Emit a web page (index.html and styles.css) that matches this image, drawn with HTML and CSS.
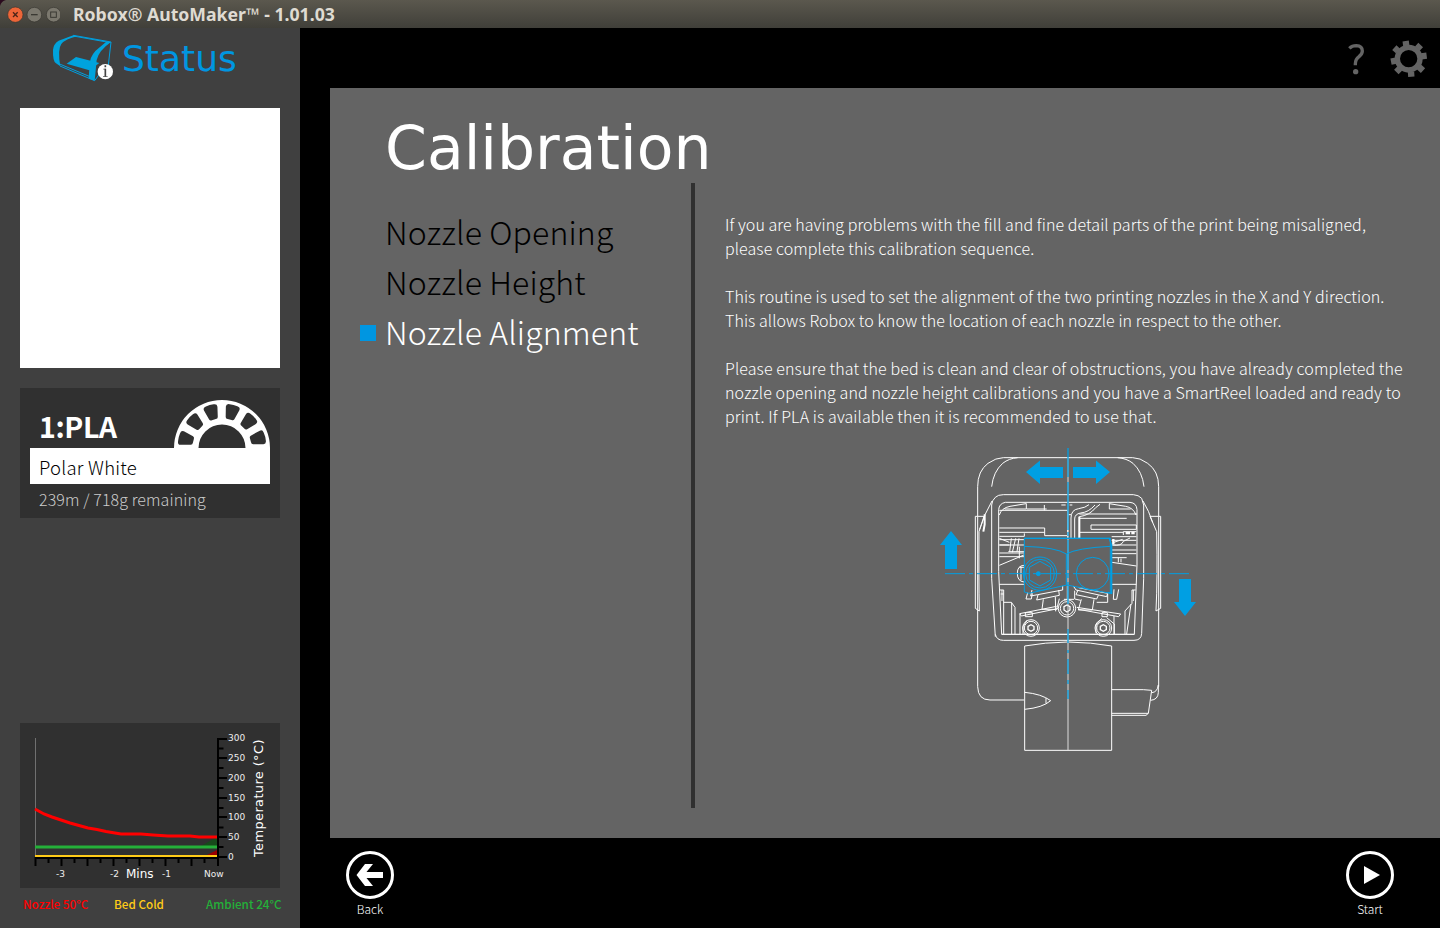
FILE: index.html
```html
<!DOCTYPE html>
<html lang="en">
<head>
<meta charset="utf-8">
<title>Robox® AutoMaker™ - 1.01.03</title>
<link rel="stylesheet" href="styles.css">
</head>
<body>
<header class="titlebar">
  <svg class="window-buttons" width="60" height="28" viewBox="0 0 180 84">
    <path d="M0 0H18Q4 3 0 18Z" fill="#2a0b1e"/>
    <circle cx="46" cy="44" r="23" fill="#ec6538" stroke="#37352f" stroke-width="2"/>
    <path d="M39 37L53 51M53 37L39 51" stroke="#4c2518" stroke-width="4"/>
    <circle cx="103" cy="44" r="22" fill="#7b786e" stroke="#37352f" stroke-width="2"/>
    <path d="M93 44H113" stroke="#3a3933" stroke-width="4"/>
    <circle cx="161" cy="44" r="22" fill="#7b786e" stroke="#37352f" stroke-width="2"/>
    <rect x="152" y="36" width="17" height="16" fill="none" stroke="#3a3933" stroke-width="3"/>
  </svg>
  <h1 class="window-title">Robox® AutoMaker™ - 1.01.03</h1>
</header>
<div class="workspace">
  <aside class="sidebar">
    <div class="status">
      <svg class="status-icon" width="64" height="50" viewBox="150 99 192 150">
        <path d="M220 106L333 126L325 195M220 108L331 128M180 198L284 242M174 190L270 230M284 242L300 220" fill="none" stroke="#009fe0" stroke-width="3"/>
        <path d="M220 106L232 109Q196 117 184 132Q172 148 181 199L168 190Q158 184 159 150Q160 132 176 122Z" fill="#00a3dd"/>
        <path d="M333 126Q296 152 290 180L284 242L266 236L269 188Q272 162 300 141L318 126Z" fill="#00a3dd"/>
        <path d="M228 171L298 189L268 211L200 191Z" fill="#00a3dd"/>
        <circle cx="316" cy="215" r="23" fill="#fff"/>
        <path d="M316 206V230M316 196V202" fill="none" stroke="#444" stroke-width="5"/>
        <path d="M310 207.500H317M309 229.500H323" fill="none" stroke="#444" stroke-width="2"/>
      </svg>
      <h2 class="status-title">Status</h2>
    </div>
    <div class="preview"></div>
    <section class="reel">
      <div class="reel-top">
        <span class="reel-type">1:PLA</span>
        <svg class="reel-icon" width="96" height="48" viewBox="-48 -48 96 48">
          <path d="M-48 0A48 48 0 0 1 48 0H23.500A23.500 23.500 0 0 0 -23.500 0Z" fill="#fff"/>
          <g fill="#303030">
            <path d="M-7 -41Q-7.500 -44 -4 -44.300Q0 -45 4 -44.300Q7.500 -44 7 -41L4.500 -31Q4 -29.300 2 -29.500H-2Q-4 -29.300 -4.500 -31Z" transform="rotate(-76)"/>
            <path d="M-7 -41Q-7.500 -44 -4 -44.300Q0 -45 4 -44.300Q7.500 -44 7 -41L4.500 -31Q4 -29.300 2 -29.500H-2Q-4 -29.300 -4.500 -31Z" transform="rotate(-46)"/>
            <path d="M-7 -41Q-7.500 -44 -4 -44.300Q0 -45 4 -44.300Q7.500 -44 7 -41L4.500 -31Q4 -29.300 2 -29.500H-2Q-4 -29.300 -4.500 -31Z" transform="rotate(-16)"/>
            <path d="M-7 -41Q-7.500 -44 -4 -44.300Q0 -45 4 -44.300Q7.500 -44 7 -41L4.500 -31Q4 -29.300 2 -29.500H-2Q-4 -29.300 -4.500 -31Z" transform="rotate(15)"/>
            <path d="M-7 -41Q-7.500 -44 -4 -44.300Q0 -45 4 -44.300Q7.500 -44 7 -41L4.500 -31Q4 -29.300 2 -29.500H-2Q-4 -29.300 -4.500 -31Z" transform="rotate(45)"/>
            <path d="M-7 -41Q-7.500 -44 -4 -44.300Q0 -45 4 -44.300Q7.500 -44 7 -41L4.500 -31Q4 -29.300 2 -29.500H-2Q-4 -29.300 -4.500 -31Z" transform="rotate(75)"/>
          </g>
        </svg>
      </div>
      <div class="reel-name">Polar White</div>
      <div class="reel-left">239m / 718g remaining</div>
    </section>
    <section class="graph">
      <svg width="260" height="165" viewBox="20 723 260 165">
        <path d="M35.500 738V856" stroke="#707070" stroke-width="1"/>
        <path d="M35 858H219" stroke="#000" stroke-width="2"/>
        <path d="M218 738V866" stroke="#000" stroke-width="2"/>
        <path d="M217 739H227M217 758H227M217 778H227M217 798H227M217 817H227M217 837H227M217 857H227M217 748.500H223.500M217 768H223.500M217 788H223.500M217 808H223.500M217 827.500H223.500M217 847H223.500" stroke="#000" stroke-width="2"/>
        <path d="M35.500 857V866M61.500 857V866M87.500 857V866M113.500 857V866M139.500 857V866M165.500 857V866M191.500 857V866M48.500 857V863M74.500 857V863M100.500 857V863M126.500 857V863M152.500 857V863M178.500 857V863M204.500 857V863" stroke="#000" stroke-width="2"/>
        <path d="M201 846L217 837V846Z" fill="#174a1b"/>
        <path d="M205 856L217 850V856Z" fill="#900"/>
        <path d="M35 856H217" stroke="#ffcb18" stroke-width="2"/>
        <path d="M35 847H217" stroke="#24b039" stroke-width="3"/>
        <path d="M35 809L44 814L52 817L61 820L70 823L79 825.500L88 828L97 829.500L106 831.500L115 833L121 834L141 834L153 835L168 836L190 836L199 837L217 837" fill="none" stroke="#f00" stroke-width="3"/>
        <g class="ticks">
          <text x="228" y="741">300</text><text x="228" y="761">250</text><text x="228" y="781">200</text><text x="228" y="801">150</text><text x="228" y="820">100</text><text x="228" y="840">50</text><text x="228" y="860">0</text>
          <text x="56" y="877">-3</text><text x="110" y="877">-2</text><text x="162" y="877">-1</text><text x="204" y="877">Now</text>
        </g>
        <text class="axis" x="126" y="878">Mins</text>
        <text class="axis vertical" transform="translate(263 857) rotate(-90)">Temperature (°C)</text>
      </svg>
    </section>
    <div class="readings">
      <span class="nozzle">Nozzle 50°C</span>
      <span class="bed">Bed Cold</span>
      <span class="ambient">Ambient 24°C</span>
    </div>
  </aside>
  <main class="main">
    <div class="topbar">
      <svg width="100" height="50" viewBox="1340 33 100 50">
        <g transform="translate(1320 28) scale(.33333)" fill="none" stroke="#646464">
          <path d="M88 61Q96 53 109 53Q127 54 127 69Q127 78 117 86Q106 94 106 108V112" stroke-width="10"/>
          <circle cx="107" cy="131" r="8" fill="#646464" stroke="none"/>
          <circle cx="266" cy="92" r="34" stroke-width="16"/>
          <path d="M259 54L257 39M292 62L302 51M304 85L320 83M296 116L309 128M273 131L274 146M240 121L229 132M228 98L213 101M234 69L223 59" stroke-width="19"/>
        </g>
      </svg>
    </div>
    <section class="panel">
      <h2 class="heading">Calibration</h2>
      <div class="columns">
        <nav class="menu">
          <div class="item"><i></i><span>Nozzle Opening</span></div>
          <div class="item"><i></i><span>Nozzle Height</span></div>
          <div class="item active"><i></i><span>Nozzle Alignment</span></div>
        </nav>
        <article class="detail">
          <p>If you are having problems with the fill and fine detail parts of the print being misaligned,<br>please complete this calibration sequence.</p>
          <p>This routine is used to set the alignment of the two printing nozzles in the X and Y direction.<br>This allows Robox to know the location of each nozzle in respect to the other.</p>
          <p>Please ensure that the bed is clean and clear of obstructions, you have already completed the<br>nozzle opening and nozzle height calibrations and you have a SmartReel loaded and ready to<br>print. If PLA is available then it is recommended to use that.</p>
          <svg class="diagram" width="280" height="310" viewBox="930 445 280 310">
            <g transform="translate(970 445) scale(.33333)" fill="none" stroke="#fff" stroke-width="3">
              <path d="M23 215V125Q23 78 54 55Q78 38 100 38H488Q510 38 533 55Q566 78 566 125V215"/>
              <path d="M65 125Q70 80 98 55Q117 40 143 38M443 38Q470 40 489 55Q517 80 522 125"/>
              <path d="M16 490V214H42L27 260Q26 400 28 498L16 490M572 490V214H540L560 260Q563 400 558 498L572 490"/>
              <path d="M76 575L65 400V180Q66 166 76 157Q84 149 100 149H490Q506 150 515 160L521 180V400L515 565Q514 586 492 586H100Q80 586 76 568"/>
              <path d="M66 168Q44 205 29 253M519 168Q537 198 548 232"/>
              <path d="M44 208V238L40 260"  stroke-width="6"/>
              <path d="M95 568L86 380V194Q87 176 106 172H480Q500 174 501 194V360L493 568Z"/>
              <path d="M88 210Q94 189 120 184L168 176M498 210Q490 188 467 184L418 176M169 175V192H104M223 180V196M418 175V192H482M88 196H293V272M170 192H230M274 180H287M299 180H307" />
              <path d="M88 249H224V272H293M88 262H224M88 274H163V265M88 284H162M88 300H118M363 240H499V253H363ZM328 207H501M330 220H470M330 262H460M425 275H499M425 286H499M425 300H499"/>
              <path d="M303 280V219Q303 194 326 191Q347 188 357 179M314 280V222Q314 207 332 204Q356 202 375 180M328 280V215Q359 211 377 188L390 178M293 280V209H303"/>
              <path d="M328 215V280" stroke-width="6"/>
              <path d="M124 280L119 320M137 280L127 322M147 280L141 320M88 280L118 292M115 320H163M460 270V260H499M432 292L458 283M427 300Q455 304 460 289L480 279"/>
              <path d="M467 264H480M484 264H494M430 282V298" stroke-width="7"/>
            </g>
            <g transform="translate(970 530) scale(.33333)" fill="none" stroke="#fff" stroke-width="3">
              <path d="M23 -40V470Q24 510 60 510H162M566 -40V470"/>
              <path d="M88 45H162M88 69H162M88 80H162M148 50V85M88 163H163M88 106L162 75M425 60H499M425 71H499M426 97L499 108M425 163H499M445 84V97M453 86V97M425 83H470"/>
              <path d="M162 106Q142 107 142 130Q142 154 162 156M153 110V151M148 112H164"/>
              <path d="M90 180H101V312M96 180V213M101 217H124L135 232V312M125 218V312M150 252V312M92 192H101M432 178L430 208H440L446 178M497 180H486V220L465 243V312M483 222L470 312M490 180V213M432 258V312M95 313H493"/>
              <path d="M173 188L168 207H184L187 190M186 180L182 198L203 194L278 180V168M204 195L200 210L268 196L266 180M220 208L216 238M256 200L257 244M216 238H260L268 206M149 251L260 229M149 251L154 258L264 236M166 248H187V260H166Z"/>
              <path d="M310 168L318 180L410 200L413 190L326 173M324 180L318 194L380 207L385 196M314 182V207L332 211M334 208L325 240H367L372 208M320 232L452 252L446 260L325 238M413 192V217H380M396 248H412V260H396Z"/>
              <path d="M292 168V210M282 208H312M172 270L159 290V313M395 265L378 285V310M410 263L433 282V312"/>
              <circle cx="291" cy="235" r="26"/><circle cx="291" cy="235" r="20"/><path d="M282 230L291 225L300 230V240L291 246L282 240Z" stroke-width="4"/>
              <circle cx="183" cy="294" r="25"/><circle cx="183" cy="294" r="20"/><path d="M174 289L183 284L192 289V299L183 304L174 299Z" stroke-width="4"/>
              <circle cx="400" cy="294" r="25"/><circle cx="400" cy="294" r="20"/><path d="M391 289L400 284L409 289V299L400 304L391 299Z" stroke-width="4"/>
            </g>
            <g transform="translate(930 630) scale(.33333)" fill="none" stroke="#fff" stroke-width="3">
              <path d="M284 361V48Q345 37 414 36Q484 37 545 48V361Z"/>
              <path d="M284 187Q335 192 362 212Q338 233 284 238M348 204V220M545 179H640L665 181L655 250L648 256H545M545 250H655M685 165Q682 187 665 188M685 165V188Q684 209 662 211"/>
            </g>
            <path d="M1068 457V750" stroke="#ddd" stroke-width="1"/>
            <g transform="translate(970 530) scale(.33333)" fill="none" stroke="#009fe3" stroke-width="3">
              <path d="M163 25H421V190L383 183L291 165L176 190L163 186ZM163 49Q260 52 289 72V165M289 72Q320 54 421 49" />
              <path d="M418 26L425 45V190L413 187M163 25H421" stroke-width="4"/>
              <circle cx="210" cy="131" r="50"/><circle cx="210" cy="131" r="43"/><circle cx="368" cy="131" r="49"/>
              <path d="M210 94L242 112V150L210 168L178 150V112Z"/><circle cx="205" cy="131" r="6" fill="#009fe3"/>
              <path d="M-75 131H668" stroke-dasharray="60 12 12 12"/>
            </g>
            <path d="M1068 448V477M1068 482V530M1068 532V536M1068 540V570M1068 574V578M1068 582V604M1068 629V643M1068 650V653M1068 659V674M1068 680V684M1068 690V699" stroke="#009fe3" stroke-width="1.300"/>
            <path d="M1026 472L1040 460.500V467H1063V478H1040V484ZM1110 472L1096 460.500V467H1073V478H1096V484ZM951 531L962 545H957V569H945V545H940ZM1185 616L1196 602H1191V579H1179V602H1174Z" fill="#009fe3"/>
          </svg>
        </article>
      </div>
    </section>
    <footer class="actions">
      <div class="action">
        <svg width="48" height="48" viewBox="-24 -24 48 48"><circle r="22.500" fill="none" stroke="#fff" stroke-width="3"/><path d="M-13.500 0L-5 -11H3L-3.500 -3H13V3H-3.500L3 11H-5Z" fill="#fff"/></svg>
        <span>Back</span>
      </div>
      <div class="action">
        <svg width="48" height="48" viewBox="-24 -24 48 48"><circle r="22.500" fill="none" stroke="#fff" stroke-width="3"/><path d="M-6 -9L10 0L-6 9Z" fill="#fff"/></svg>
        <span>Start</span>
      </div>
    </footer>
  </main>
</div>
</body>
</html>
```
FILE: styles.css
```css
* { box-sizing: border-box; }
body { margin: 0; width: 1440px; height: 928px; overflow: hidden; background: #000; color: #fff; font-family: "Noto Sans CJK SC", "Noto Sans", sans-serif; font-weight: 300; }
h1, h2, p { margin: 0; font-weight: inherit; }
svg { display: block; flex: none; }
span { white-space: nowrap; }
.titlebar { height: 28px; display: flex; background: linear-gradient(#5b584e, #403f39); }
.window-title { margin-left: 13px; font: bold 17.67px/28px "Noto Sans", sans-serif; color: #dfdbd2; white-space: nowrap; }
.workspace { display: flex; height: 900px; }
.sidebar { width: 300px; padding: 5px 20px 0; background: #404040; display: flex; flex-direction: column; }
.status { height: 75px; display: flex; padding-left: 30px; }
.status-title { margin-left: 8px; font: 36px/51px "DejaVu Sans", sans-serif; color: #0096e1; }
.preview { height: 260px; background: #fff; }
.reel { margin-top: 20px; height: 130px; padding: 12px 10px 0; background: #303030; }
.reel-top { height: 48px; display: flex; justify-content: space-between; padding-left: 9px; }
.reel-type { font-size: 28.5px; line-height: 52px; font-weight: 700; letter-spacing: -.4px; }
.reel-name { height: 36px; padding-left: 9px; background: #fff; color: #000; font-size: 18.5px; line-height: 38px; letter-spacing: .25px; }
.reel-left { padding-left: 9px; font-size: 16px; line-height: 31px; letter-spacing: .1px; color: #ccc; }
.graph { margin-top: 205px; height: 165px; background: #303030; }
.ticks { font: 9px "DejaVu Sans", sans-serif; fill: #eee; }
.axis { font: 12px "DejaVu Sans", sans-serif; fill: #fff; }
.vertical { font-size: 13px; letter-spacing: .35px; }
.readings { display: flex; font-size: 11.7px; line-height: 31px; font-weight: 500; white-space: nowrap; }
.readings span { flex: none; }
.nozzle { color: #f00; width: 91px; margin-left: 3px; }
.bed { color: #ffcb18; width: 92px; }
.ambient { color: #24b039; }
.main { width: 1140px; padding-left: 30px; }
.topbar { height: 60px; display: flex; justify-content: flex-end; align-items: center; }
.panel { height: 750px; background: #646464; }
.heading { height: 95px; padding: 25px 0 0 55px; font: 60px/70px "DejaVu Sans", sans-serif; }
.columns { display: flex; height: 625px; }
.menu { width: 365px; padding: 25px 0 0 30px; border-right: 4px solid #303030; }
.item { height: 50px; display: flex; align-items: center; font-size: 32px; letter-spacing: .13px; color: #000; }
.item span { line-height: 44px; padding-bottom: 5px; }
.item i { width: 16px; height: 16px; margin-right: 9px; }
.active { color: #fff; }
.active i { background: #0096e1; }
.detail { padding: 29px 0 0 30px; }
.detail p { height: 72px; font-size: 16px; line-height: 24px; letter-spacing: .08px; white-space: nowrap; }
.detail p:nth-of-type(3) { height: 89px; letter-spacing: .11px; }
.diagram { margin-left: 205px; }
.actions { height: 90px; padding: 13px 46px 0 16px; display: flex; justify-content: space-between; }
.action { width: 48px; display: flex; flex-direction: column; align-items: center; font-size: 12px; line-height: 19px; }
```
